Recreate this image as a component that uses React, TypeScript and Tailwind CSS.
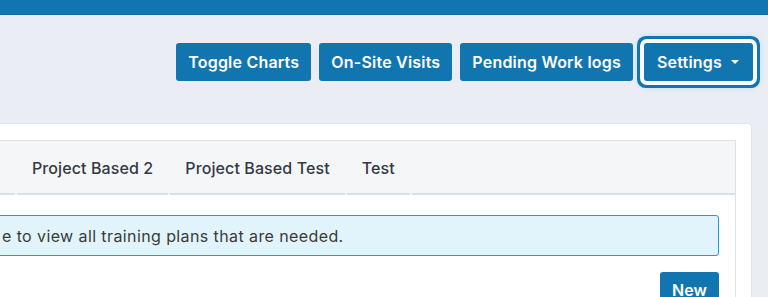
const tabs = ["Project Based 2", "Project Based Test", "Test"];

const actions = ["Toggle Charts", "On-Site Visits", "Pending Work logs"];

export default function App() {
  return (
    <div
      className="w-[768px] h-[297px] overflow-hidden bg-[#eaeef4] text-[#333a44]"
      style={{ fontFamily: "Inter, 'Noto Sans', sans-serif" }}
    >
      {/* top bar */}
      <div className="h-[15px] bg-[#1175b0] border-b border-[#0e6aa2]"></div>

      {/* header actions */}
      <div className="flex justify-end items-center gap-2 pr-[15px] pt-[28px]">
        {actions.map((label) => (
          <button
            key={label}
            className="h-[38px] px-[12px] rounded-[3px] bg-[#1175b0] text-white text-[16px] font-semibold tracking-[0.2px]"
          >
            {label}
          </button>
        ))}
        <button className="ml-[3px] h-[38px] pl-[13px] pr-[14px] flex items-center gap-[9px] rounded-[3px] bg-[#1175b0] text-white text-[16px] font-semibold tracking-[0.2px] ring-[3px] ring-[#1175b0] ring-offset-[4px] ring-offset-white shadow-[0_0_10px_3px_rgba(17,117,176,0.4)]">
          Settings
          <span className="w-0 h-0 border-l-[4px] border-r-[4px] border-t-[4px] border-l-transparent border-r-transparent border-t-white"></span>
        </button>
      </div>

      {/* card */}
      <div className="-ml-[40px] mr-[16px] mt-[42px] bg-white border border-[#dfe3ea] rounded-[4px] pl-[16px] pr-[15px] pt-[16px]">
        <ul className="flex h-[55px] bg-[#f5f6f8] border-t border-r border-[#dde2ea]">
          <li className="w-[38px] border-b-2 border-[#dbe0e7]"></li>
          {tabs.map((t) => (
            <li
              key={t}
              className="ml-[2px] px-[15px] pt-[2px] flex items-center border-b-2 border-[#dbe0e7] text-[16px] font-medium tracking-[0.1px]"
            >
              {t}
            </li>
          ))}
          <li className="ml-[2px] flex-1 border-b-2 border-[#dbe0e7]"></li>
        </ul>
        <div className="border-r border-[#dde2ea] pl-[16px] pr-[16px] pt-[20px] pb-[20px]">
          <div className="h-[41px] flex items-center pl-[8px] bg-[#e1f4fb] border border-[#1a9ee2] rounded-[3px] text-[16px] tracking-[0.4px] text-[#3a3a3a]">
            e to view all training plans that are needed.
          </div>
          <div className="flex justify-end mt-[16px]">
            <button className="h-[36px] w-[59px] rounded-[3px] bg-[#1175b0] text-white text-[16px] font-semibold">
              New
            </button>
          </div>
        </div>
      </div>
    </div>
  );
}
